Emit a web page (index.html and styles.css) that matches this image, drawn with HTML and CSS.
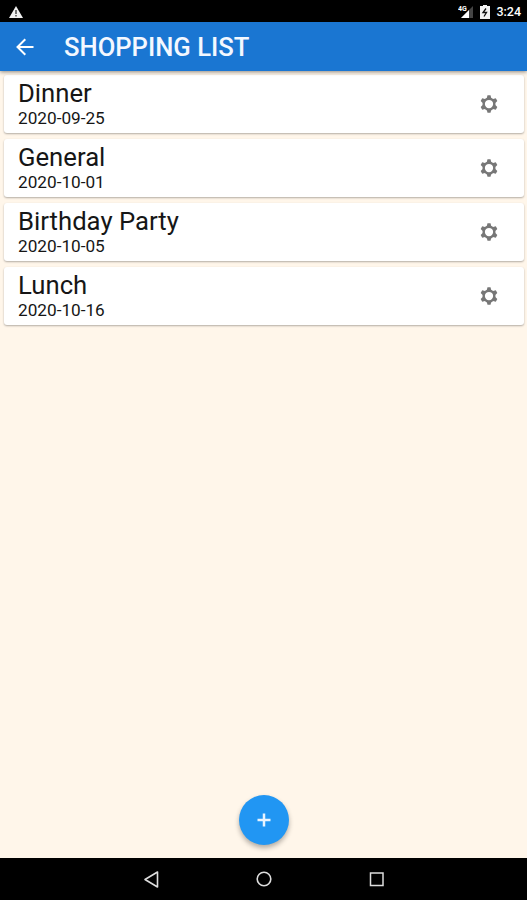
FILE: index.html
```html
<!DOCTYPE html>
<html lang="en">

<head>
    <meta charset="UTF-8" />
    <title>Shopping List</title>
    <link rel="stylesheet" href="styles.css">
</head>

<body>
    <svg width="0" height="0" class="symbols">
        <symbol id="gear" viewBox="0 0 24 24">
            <circle cx="12" cy="12" r="6.4" fill="none" stroke="#777" stroke-width="2.900" />
            <path d="M10.200 1.500h3.600l1.200 4.500h-6zM10.200 22.500h3.600l1.200-4.500h-6z" />
            <path d="M10.200 1.500h3.600l1.200 4.500h-6zM10.200 22.500h3.600l1.200-4.500h-6z" transform="rotate(60 12 12)" />
            <path d="M10.200 1.500h3.600l1.200 4.500h-6zM10.200 22.500h3.600l1.200-4.500h-6z" transform="rotate(120 12 12)" />
        </symbol>
    </svg>

    <div class="screen">
        <div class="status-bar">
            <svg class="warning" width="14" height="12" viewBox="0 0 14 12">
                <path d="M7 0L14 12H0z" fill="#f0f0f0" />
                <path d="M7 4v4M7 9v1.5" stroke="#555" stroke-width="1.6" />
            </svg>
            <div class="status-icons">
                <svg width="16" height="14" viewBox="0 0 16 14">
                    <path d="M15 1v12H3z" fill="#444" />
                    <path d="M11 5v8H3z" fill="#fff" />
                    <text x="0" y="6" class="network">4G</text>
                </svg>
                <svg class="battery" width="10" height="14" viewBox="0 0 10 14">
                    <path d="M3 0h4v1h3V14H0V1h3z" fill="#f4f4f4" />
                    <path d="M6 3.500L3 7.500h3.500L4 11.500" fill="none" stroke="#111" stroke-width="1.300" />
                </svg>
                <span class="clock">3:24</span>
            </div>
        </div>

        <div class="toolbar">
            <svg class="back" width="18" height="18" viewBox="0 0 18 18">
                <path d="M17.500 9H2M9.300 1.200L1.500 9l7.800 7.800" fill="none" stroke="#fff" stroke-width="2" />
            </svg>
            <h1 class="title">SHOPPING LIST</h1>
        </div>

        <div class="list">
            <div class="card">
                <div>
                    <div class="name">Dinner</div>
                    <div class="date">2020-09-25</div>
                </div>
                <svg class="gear"><use href="#gear" /></svg>
            </div>
            <div class="card">
                <div>
                    <div class="name">General</div>
                    <div class="date">2020-10-01</div>
                </div>
                <svg class="gear"><use href="#gear" /></svg>
            </div>
            <div class="card">
                <div>
                    <div class="name">Birthday Party</div>
                    <div class="date">2020-10-05</div>
                </div>
                <svg class="gear"><use href="#gear" /></svg>
            </div>
            <div class="card">
                <div>
                    <div class="name">Lunch</div>
                    <div class="date">2020-10-16</div>
                </div>
                <svg class="gear"><use href="#gear" /></svg>
            </div>
        </div>

        <div class="add-button">
            <svg width="14" height="14" viewBox="0 0 14 14">
                <path d="M7 0.500v13M0.500 7h13" stroke="#e8f4ff" stroke-width="2.500" />
            </svg>
        </div>

        <div class="nav-bar">
            <svg width="16" height="18" viewBox="0 0 16 18">
                <path d="M14.500 2v15L2 9.500z" fill="none" stroke="#ddd" stroke-width="1.600" stroke-linejoin="round" />
            </svg>
            <svg width="16" height="16" viewBox="0 0 16 16">
                <circle cx="8" cy="8" r="6.800" fill="none" stroke="#ddd" stroke-width="1.600" />
            </svg>
            <svg width="16" height="16" viewBox="0 0 16 16">
                <rect x="1.500" y="2" width="12.500" height="12.500" fill="none" stroke="#ddd" stroke-width="1.500" />
            </svg>
        </div>
    </div>
</body>

</html>
```

FILE: styles.css
```css
body {
    margin: 0;
    font-family: Roboto, Arial, sans-serif;
}

.symbols {
    display: none;
}

.screen {
    width: 527px;
    height: 900px;
    display: flex;
    flex-direction: column;
    background-color: #fff6ea;
    overflow: hidden;
}

.status-bar {
    height: 22px;
    box-sizing: border-box;
    padding: 1px 6px 0 9px;
    display: flex;
    align-items: center;
    justify-content: space-between;
    background-color: #000;
    color: #fff;
}

.status-icons {
    display: flex;
    align-items: center;
}

.network {
    font-size: 7px;
    font-weight: bold;
    fill: #fff;
}

.battery {
    margin-left: 6px;
}

.clock {
    margin-left: 6px;
    font-size: 12.5px;
    font-weight: 500;
    line-height: 20px;
}

.toolbar {
    height: 49px;
    padding-left: 16px;
    display: flex;
    align-items: center;
    background-color: #1a76d2;
    box-shadow: 0 1px 4px rgba(0, 0, 0, 0.45);
    z-index: 1;
}

.title {
    margin: 0 0 0 30px;
    color: #f4f8ff;
    font-size: 25.6px;
    font-weight: 500;
    line-height: 30px;
}

.list {
    flex: 1;
    padding: 4px 3px 0 4px;
    display: flex;
    flex-direction: column;
    gap: 6.5px;
}

.card {
    height: 57.6px;
    box-sizing: border-box;
    padding: 4px 25px 0 14px;
    display: flex;
    justify-content: space-between;
    background-color: #fff;
    border-radius: 3px;
    box-shadow: 0 1px 2px rgba(0, 0, 0, 0.3);
    color: #161616;
}

.name {
    font-size: 25.7px;
    line-height: 29px;
}

.date {
    font-size: 17.2px;
    line-height: 20px;
}

.gear {
    width: 20px;
    height: 20px;
    margin-top: 15px;
    fill: #777;
}

.add-button {
    width: 50px;
    height: 50px;
    margin: 0 auto 13px;
    display: flex;
    align-items: center;
    justify-content: center;
    background-color: #2196f3;
    border-radius: 50%;
    box-shadow: 0 3px 5px rgba(0, 0, 0, 0.3);
}

.nav-bar {
    height: 42px;
    display: flex;
    align-items: center;
    justify-content: center;
    gap: 97px;
    background-color: #000;
}
```
